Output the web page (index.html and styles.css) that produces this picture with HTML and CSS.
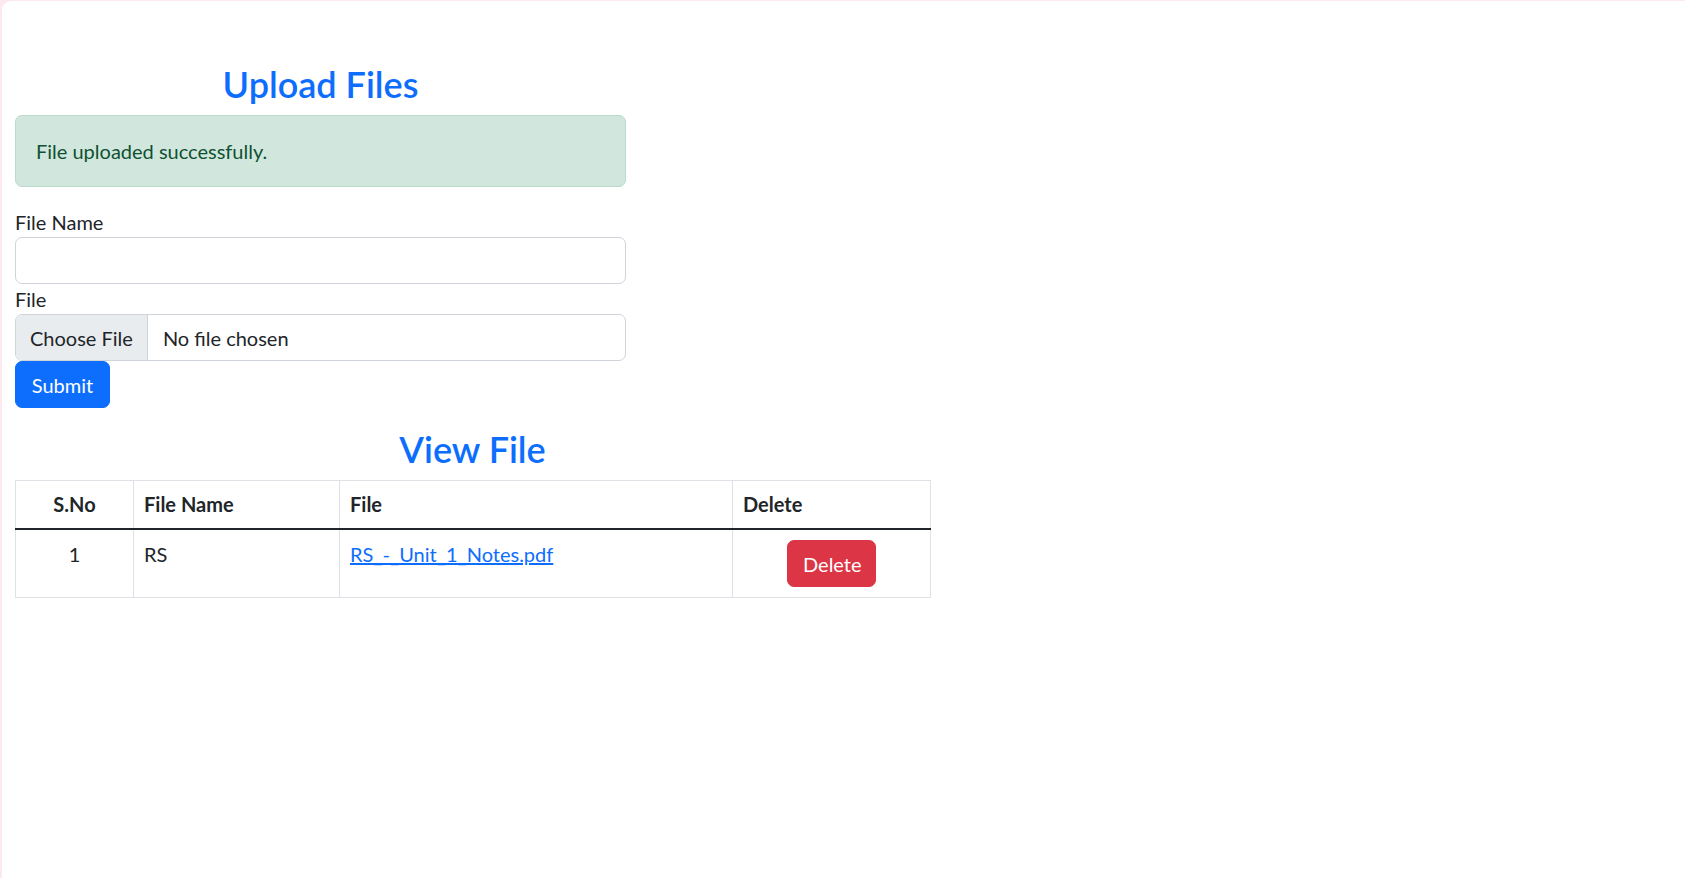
FILE: index.html
```html
<!DOCTYPE html>
<html lang="en">
<head>
<meta charset="utf-8">
<title>Upload Files</title>
<link rel="stylesheet" href="styles.css">
</head>
<body>
<div class="page">
  <section class="upload">
    <h2 class="heading heading-upload">Upload Files</h2>
    <div class="alert">File uploaded successfully.</div>
    <form class="upload-form">
      <label class="form-label" for="fname">File Name</label>
      <input id="fname" class="form-control" type="text">
      <label class="form-label" for="ffile">File</label>
      <label class="file-control" for="ffile">
        <input id="ffile" class="file-hidden" type="file">
        <span class="file-btn">Choose File</span>
        <span class="file-name">No file chosen</span>
      </label>
      <button type="button" class="btn btn-primary">Submit</button>
    </form>
  </section>

  <section class="view">
    <h2 class="heading">View File</h2>
    <table class="files">
      <colgroup>
        <col class="c-sno">
        <col class="c-name">
        <col class="c-file">
        <col class="c-del">
      </colgroup>
      <thead>
        <tr>
          <th class="center">S.No</th>
          <th>File Name</th>
          <th>File</th>
          <th>Delete</th>
        </tr>
      </thead>
      <tbody>
        <tr>
          <td class="center">1</td>
          <td>RS</td>
          <td><a class="file-link" href="#">RS_-_Unit_1_Notes.pdf</a></td>
          <td class="center"><button type="button" class="btn btn-danger">Delete</button></td>
        </tr>
      </tbody>
    </table>
  </section>
</div>
</body>
</html>
```

FILE: styles.css
```css
html, body {
  margin: 0;
  padding: 0;
}

body {
  background: #fde8ef;
  font-family: Lato, "Noto Sans", "Liberation Sans", sans-serif;
  font-size: 20px;
  line-height: 30px;
  color: #212529;
}

.page {
  margin: 1px 0 0 2px;
  min-height: calc(100vh - 1px);
  box-sizing: border-box;
  background: #ffffff;
  border-top-left-radius: 9px;
  padding: 59px 0 0 13px;
}

.upload {
  width: 611px;
}

.heading {
  margin: 0 0 7px;
  font-size: 36px;
  line-height: 48px;
  font-weight: 600;
  color: #0d6efd;
  text-align: center;
}

.alert {
  padding: 20px 20px;
  border: 1px solid #badbcc;
  border-radius: 7px;
  background: #d1e7dd;
  color: #0f5132;
  margin-bottom: 20px;
}

.upload-form {
  display: flex;
  flex-direction: column;
  align-items: flex-start;
}

.form-label {
  display: block;
  line-height: 30px;
}

.form-control {
  display: block;
  box-sizing: border-box;
  width: 100%;
  height: 47px;
  margin: 0;
  padding: 7px 15px;
  border: 1px solid #ced4da;
  border-radius: 7px;
  font: inherit;
  color: #212529;
  background: #fff;
}

.file-control {
  display: flex;
  align-items: stretch;
  box-sizing: border-box;
  width: 100%;
  height: 47px;
  border: 1px solid #ced4da;
  border-radius: 7px;
  overflow: hidden;
  background: #fff;
  cursor: pointer;
}

.file-hidden {
  display: none;
}

.file-btn {
  display: flex;
  align-items: center;
  padding: 0 14px;
  background: #e9ecef;
  border-right: 1px solid #ced4da;
  color: #212529;
}

.file-name {
  display: flex;
  align-items: center;
  padding-left: 15px;
}

.btn {
  box-sizing: border-box;
  height: 47px;
  padding: 0 15px;
  border: 1px solid transparent;
  border-radius: 7px;
  font: inherit;
  color: #fff;
  cursor: pointer;
}

.btn-primary {
  background: #0d6efd;
  border-color: #0d6efd;
  width: 95px;
}

.btn-danger {
  background: #dc3545;
  border-color: #dc3545;
  width: 89px;
}

.view {
  width: 915px;
  margin-top: 17px;
}

.files {
  width: 915px;
  table-layout: fixed;
  border-collapse: collapse;
}

.c-sno { width: 118px; }
.c-name { width: 206px; }
.c-file { width: 393px; }
.c-del { width: 198px; }

.files th,
.files td {
  border: 1px solid #dee2e6;
  text-align: left;
  vertical-align: top;
  padding: 9px 10px 10px;
}

.files td:last-child {
  padding-top: 10px;
}

.files th {
  font-weight: 700;
  padding: 8px 10px 9px;
}

.files thead th {
  border-bottom: 2px solid #212529;
}

.files .center {
  text-align: center;
}

.file-link {
  color: #0d6efd;
  text-decoration: underline;
}
```
